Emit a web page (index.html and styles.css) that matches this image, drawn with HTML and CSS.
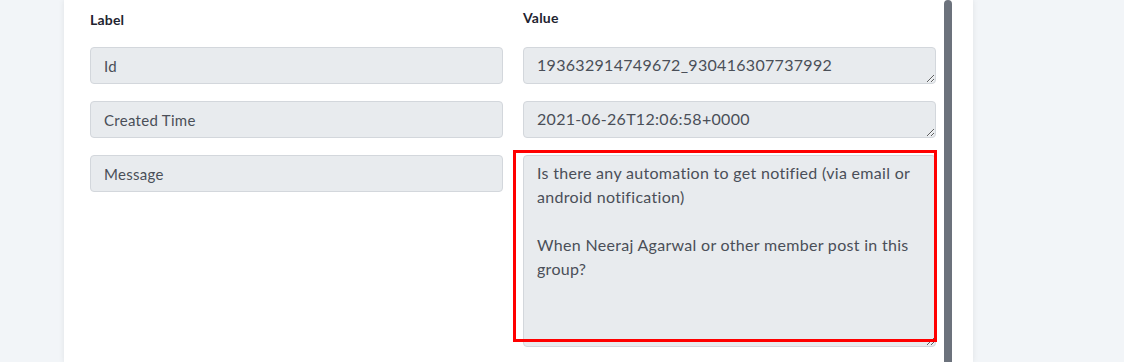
FILE: index.html
```html
<!DOCTYPE html>
<html lang="en">
<head>
  <meta charset="UTF-8">
  <title>Field Mapping</title>
  <link rel="stylesheet" href="styles.css">
</head>
<body>
  <div class="panel">
    <div class="fields">
      <div class="column">
        <div class="column-title">Label</div>
        <div class="field-label">Id</div>
        <div class="field-label">Created Time</div>
        <div class="field-label">Message</div>
      </div>
      <div class="column">
        <div class="column-title value-title">Value</div>
        <textarea class="field-value" readonly>193632914749672_930416307737992</textarea>
        <textarea class="field-value" readonly>2021-06-26T12:06:58+0000</textarea>
        <div class="highlight-wrap">
          <textarea class="field-value message" readonly>Is there any automation to get notified (via email or android notification)

When Neeraj Agarwal or other member post in this group?</textarea>
          <div class="highlight"></div>
        </div>
      </div>
    </div>
    <div class="scroll-thumb"></div>
  </div>
</body>
</html>
```

FILE: styles.css
```css
body {
  margin: 0;
  background-color: #F2F5F8;
  font-family: 'Lato', 'Noto Sans', sans-serif;
  height: 362px;
  overflow: hidden;
}

.panel {
  margin-left: 64px;
  width: 909px;
  height: 362px;
  background: #FFFFFF;
  box-shadow: 0 0 6px rgba(0, 0, 0, 0.08);
  display: flex;
}

.fields {
  display: grid;
  grid-template-columns: 413px 413px;
  column-gap: 20px;
  padding-left: 26px;
}

.column {
  display: flex;
  flex-direction: column;
  gap: 17px;
}

.column-title {
  font-size: 14px;
  font-weight: 700;
  letter-spacing: 0.2px;
  color: #1F2430;
  height: 20px;
  padding-top: 10px;
  line-height: 20px;
}

.value-title {
  line-height: 16px;
}

.field-label {
  box-sizing: border-box;
  height: 37px;
  padding: 0 13px;
  display: flex;
  align-items: center;
  background: #E8EBEE;
  border: 1px solid #D3D7DC;
  border-radius: 4px;
  font-size: 15px;
  letter-spacing: 0.3px;
  color: #4A4F58;
}

.field-value {
  display: block;
  box-sizing: border-box;
  width: 413px;
  height: 37px;
  margin: 0;
  padding: 5px 13px 6px;
  background: #E8EBEE;
  border: 1px solid #D3D7DC;
  border-radius: 4px;
  font-family: 'Lato', 'Noto Sans', sans-serif;
  font-size: 16px;
  letter-spacing: 0.3px;
  line-height: 24px;
  color: #4A4F58;
  overflow: hidden;
  outline: none;
}

.message {
  height: 192px;
}

.highlight-wrap {
  position: relative;
}

.highlight {
  position: absolute;
  left: -10px;
  top: -5px;
  width: 424px;
  height: 192px;
  box-sizing: border-box;
  border: 3px solid #FF0000;
  pointer-events: none;
}

.scroll-thumb {
  width: 8px;
  height: 362px;
  margin-left: 8px;
  background: #6C727C;
  border-radius: 4px 4px 0 0;
}
```
